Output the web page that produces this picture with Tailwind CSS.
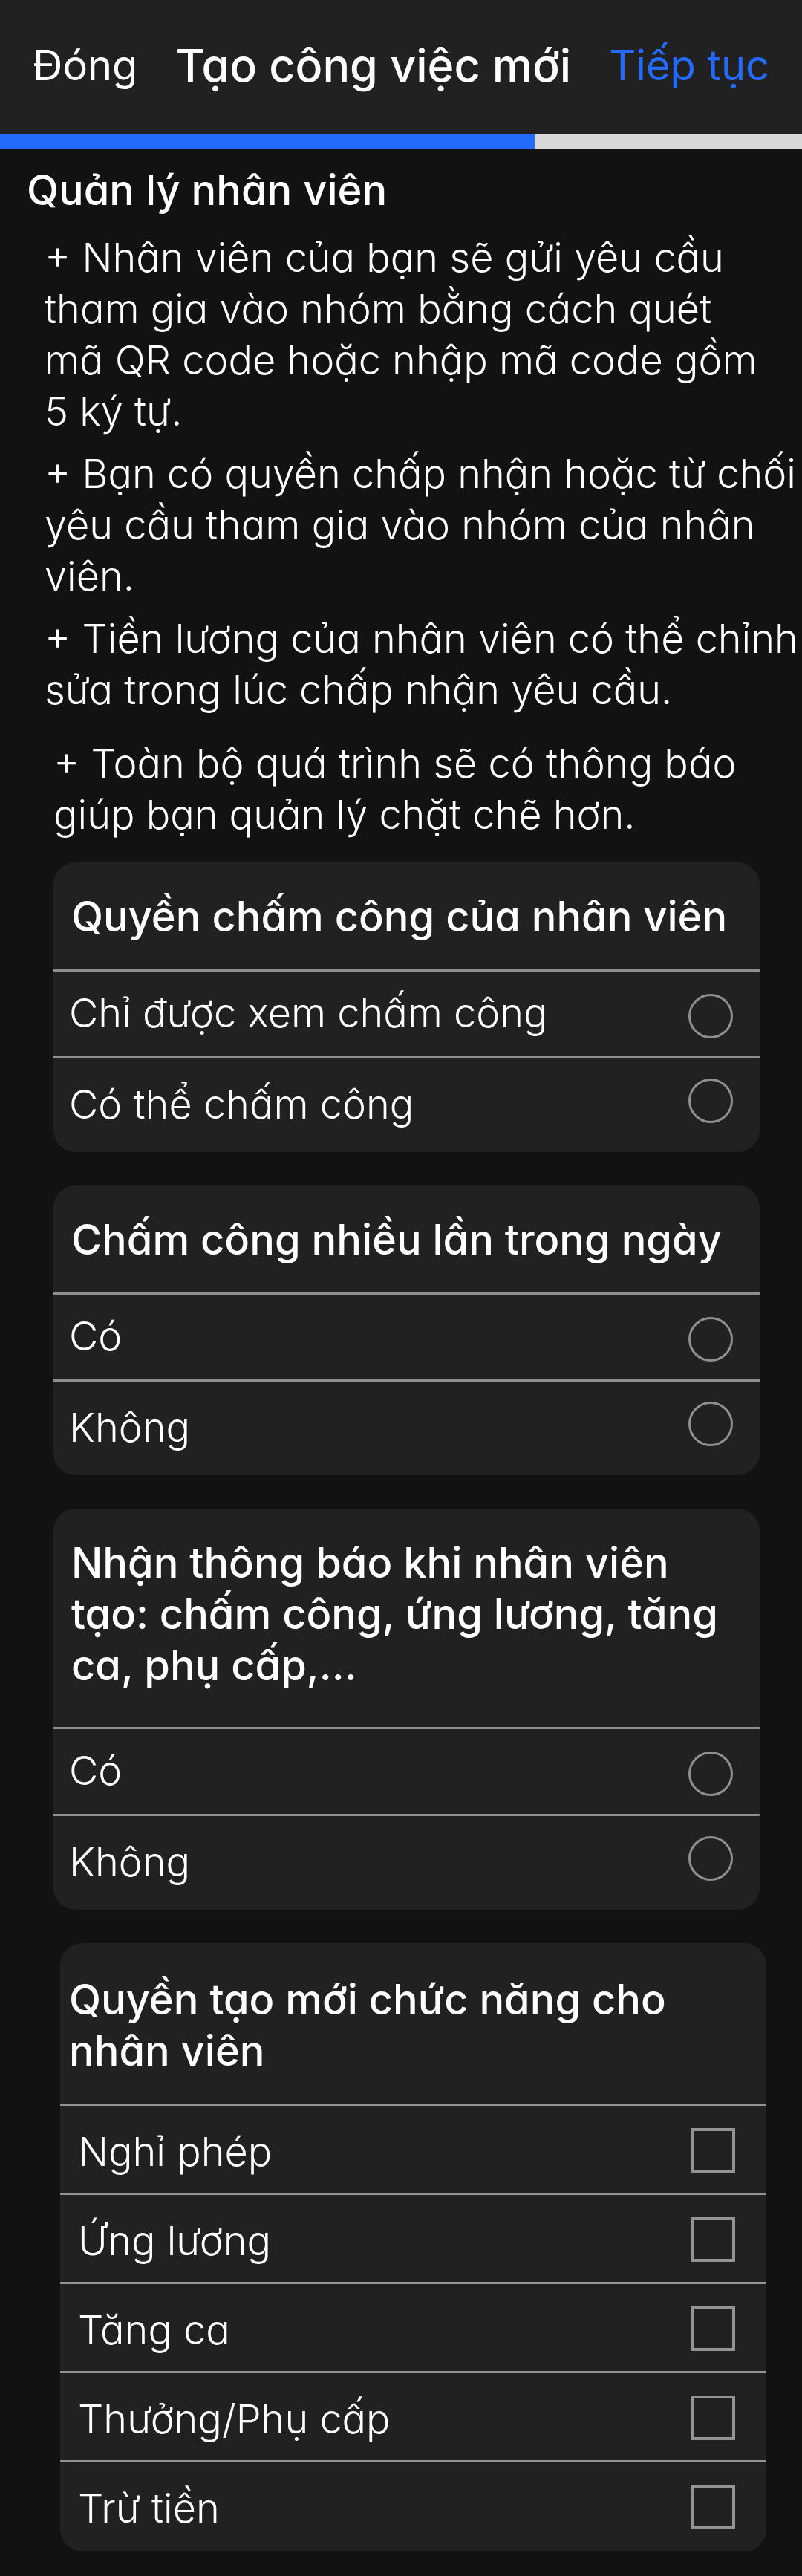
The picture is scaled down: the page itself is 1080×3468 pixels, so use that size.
<!DOCTYPE html>
<html lang="vi">
<head>
<meta charset="utf-8">
<meta name="viewport" content="width=device-width, initial-scale=1">
<title>Tạo công việc mới</title>
<script src="https://cdn.jsdelivr.net/npm/@tailwindcss/browser@4"></script>
</head>
<body class="min-h-screen bg-[#121212] pb-[33px] font-['Inter',sans-serif] text-[54px] leading-[69px] font-light text-white [font-feature-settings:'cv11']">
<header class="flex h-[180px] items-center justify-between bg-[#212121] px-[44px] pb-1">
  <button type="button" class="text-[56px] font-normal">Đóng</button>
  <h1 class="text-[61px] font-medium">Tạo công việc mới</h1>
  <button type="button" class="text-[56px] font-normal text-[#246bfd]">Tiếp tục</button>
</header>
<div role="progressbar" aria-label="Tiến độ" aria-valuenow="2" aria-valuemin="0" aria-valuemax="3" class="h-[21px] bg-[#d9d9d9]"><div class="h-full w-2/3 bg-[#246bfd]"></div></div>
<main>
  <h2 class="pt-[21px] pl-[36px] text-[56px] leading-[69px] font-medium">Quản lý nhân viên</h2>
  <div class="flex flex-col gap-[15px] pt-[21px] pl-[60px]">
    <p>+ Nhân viên của bạn sẽ gửi yêu cầu<br>tham gia vào nhóm bằng cách quét<br>mã QR code hoặc nhập mã code gồm<br>5 ký tự.</p>
    <p>+ Bạn có quyền chấp nhận hoặc từ chối<br>yêu cầu tham gia vào nhóm của nhân<br>viên.</p>
    <p>+ Tiền lương của nhân viên có thể chỉnh<br>sửa trong lúc chấp nhận yêu cầu.</p>
  </div>
  <p class="pt-[30px] pl-[72px]">+ Toàn bộ quá trình sẽ có thông báo<br>giúp bạn quản lý chặt chẽ hơn.</p>

  <form class="flex flex-col gap-[45px] pt-[30px] pr-[57px] pl-[72px]">
    <fieldset class="rounded-[30px] bg-[#212121]">
      <legend class="float-left w-full px-6 pt-[39px] pb-[36px] text-[56px] leading-[69px] font-medium">Quyền chấm công của nhân viên</legend>
      <label class="clear-both flex h-[117px] items-start justify-between border-t-3 border-[#8f8f8f] pt-[21px] pr-[36px] pl-[21px]">Chỉ được xem chấm công<input type="radio" name="attendance" class="mt-[9px] size-[60px] shrink-0 appearance-none rounded-full border-3 border-[#8f8f8f] checked:bg-[#246bfd]"></label>
      <label class="flex h-[129px] items-start justify-between border-t-3 border-[#8f8f8f] pt-[27px] pr-[36px] pl-[21px]">Có thể chấm công<input type="radio" name="attendance" class="size-[60px] shrink-0 appearance-none rounded-full border-3 border-[#8f8f8f] checked:bg-[#246bfd]"></label>
    </fieldset>
    <fieldset class="rounded-[30px] bg-[#212121]">
      <legend class="float-left w-full px-6 pt-[39px] pb-[36px] text-[56px] leading-[69px] font-medium">Chấm công nhiều lần trong ngày</legend>
      <label class="clear-both flex h-[117px] items-start justify-between border-t-3 border-[#8f8f8f] pt-[21px] pr-[36px] pl-[21px]">Có<input type="radio" name="multiple" class="mt-[9px] size-[60px] shrink-0 appearance-none rounded-full border-3 border-[#8f8f8f] checked:bg-[#246bfd]"></label>
      <label class="flex h-[129px] items-start justify-between border-t-3 border-[#8f8f8f] pt-[27px] pr-[36px] pl-[21px]">Không<input type="radio" name="multiple" class="size-[60px] shrink-0 appearance-none rounded-full border-3 border-[#8f8f8f] checked:bg-[#246bfd]"></label>
    </fieldset>
    <fieldset class="rounded-[30px] bg-[#212121]">
      <legend class="float-left w-full px-6 pt-[39px] pb-[48px] text-[56px] leading-[69px] font-medium">Nhận thông báo khi nhân viên<br>tạo: chấm công, ứng lương, tăng<br>ca, phụ cấp,...</legend>
      <label class="clear-both flex h-[117px] items-start justify-between border-t-3 border-[#8f8f8f] pt-[21px] pr-[36px] pl-[21px]">Có<input type="radio" name="notify" class="mt-[9px] size-[60px] shrink-0 appearance-none rounded-full border-3 border-[#8f8f8f] checked:bg-[#246bfd]"></label>
      <label class="flex h-[129px] items-start justify-between border-t-3 border-[#8f8f8f] pt-[27px] pr-[36px] pl-[21px]">Không<input type="radio" name="notify" class="size-[60px] shrink-0 appearance-none rounded-full border-3 border-[#8f8f8f] checked:bg-[#246bfd]"></label>
    </fieldset>
    <fieldset class="-mr-[9px] ml-[9px] rounded-[30px] bg-[#212121]">
      <legend class="float-left w-full px-3 pt-[42px] pb-[36px] text-[56px] leading-[69px] font-medium">Quyền tạo mới chức năng cho<br>nhân viên</legend>
      <label class="clear-both flex h-[120px] items-start justify-between border-t-3 border-[#949494] pt-[27px] pr-[42px] pl-[24px]">Nghỉ phép<input type="checkbox" class="mt-[3px] size-[60px] shrink-0 appearance-none border-4 border-[#949494] checked:bg-[#246bfd]"></label>
      <label class="flex h-[120px] items-start justify-between border-t-3 border-[#949494] pt-[27px] pr-[42px] pl-[24px]">Ứng lương<input type="checkbox" class="mt-[3px] size-[60px] shrink-0 appearance-none border-4 border-[#949494] checked:bg-[#246bfd]"></label>
      <label class="flex h-[120px] items-start justify-between border-t-3 border-[#949494] pt-[27px] pr-[42px] pl-[24px]">Tăng ca<input type="checkbox" class="mt-[3px] size-[60px] shrink-0 appearance-none border-4 border-[#949494] checked:bg-[#246bfd]"></label>
      <label class="flex h-[120px] items-start justify-between border-t-3 border-[#949494] pt-[27px] pr-[42px] pl-[24px]">Thưởng/Phụ cấp<input type="checkbox" class="mt-[3px] size-[60px] shrink-0 appearance-none border-4 border-[#949494] checked:bg-[#246bfd]"></label>
      <label class="flex h-[123px] items-start justify-between border-t-3 border-[#949494] pt-[27px] pr-[42px] pl-[24px]">Trừ tiền<input type="checkbox" class="mt-[3px] size-[60px] shrink-0 appearance-none border-4 border-[#949494] checked:bg-[#246bfd]"></label>
    </fieldset>
  </form>
</main>
</body>
</html>
